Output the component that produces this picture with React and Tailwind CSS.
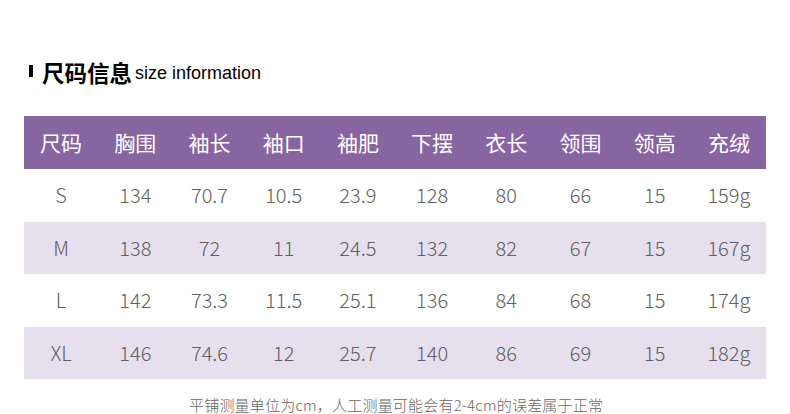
import React from "react";

const headers = ["尺码", "胸围", "袖长", "袖口", "袖肥", "下摆", "衣长", "领围", "领高", "充绒"];

const rows = [
  ["S", "134", "70.7", "10.5", "23.9", "128", "80", "66", "15", "159g"],
  ["M", "138", "72", "11", "24.5", "132", "82", "67", "15", "167g"],
  ["L", "142", "73.3", "11.5", "25.1", "136", "84", "68", "15", "174g"],
  ["XL", "146", "74.6", "12", "25.7", "140", "86", "69", "15", "182g"],
];

const App = () => {
  return (
    <div
      className="w-[790px] h-[414px] bg-white overflow-hidden"
      style={{ fontFamily: '"Noto Sans CJK SC", "Noto Sans", sans-serif' }}
    >
      {/* Title */}
      <div className="flex items-end h-[86px] pl-[29px] pb-[3px]">
        <span className="w-[4px] h-[12px] bg-black mb-[6px] mr-[9px]"></span>
        <span className="text-[22.5px] font-bold leading-none text-black">尺码信息</span>
        <span
          className="text-[18px] leading-none text-black ml-[3px] mb-[1px]"
          style={{ fontFamily: '"Liberation Sans", sans-serif' }}
        >
          size information
        </span>
      </div>

      {/* Table */}
      <div className="mx-[24px] mt-[30px] w-[742px]">
        <div className="grid grid-cols-10 h-[53px] bg-[#8765a0] items-center">
          {headers.map((h) => (
            <div key={h} className="text-center text-white text-[21px] font-normal">
              {h}
            </div>
          ))}
        </div>
        {rows.map((row, i) => (
          <div
            key={row[0]}
            className={`grid grid-cols-10 h-[52.5px] items-center ${i % 2 === 1 ? "bg-[#e6dfee]" : "bg-white"}`}
          >
            {row.map((cell, j) => (
              <div key={j} className="text-center text-[#606060] text-[20px] font-light">
                {cell}
              </div>
            ))}
          </div>
        ))}
      </div>

      {/* Note */}
      <div className="mt-[17px] pl-[189px] text-[15px] leading-[17px] text-[#666666] font-light tracking-[0.2px]">
        平铺测量单位为cm，人工测量可能会有2-4cm的误差属于正常
      </div>
    </div>
  );
};

export default App;
